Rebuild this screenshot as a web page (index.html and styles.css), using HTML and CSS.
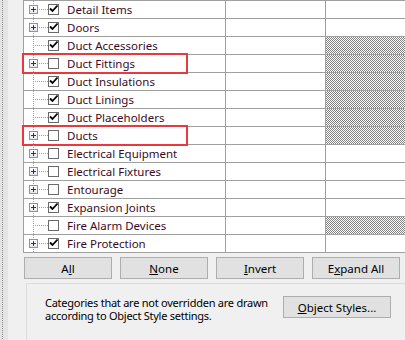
FILE: index.html
```html
<!DOCTYPE html>
<html lang="en">
<head>
    <meta charset="UTF-8">
    <meta name="viewport" content="width=device-width, initial-scale=1.0">
    <title>Visibility/Graphic Overrides</title>
    <link rel="stylesheet" href="styles.css">
</head>
<body>
    <div class="edge"></div>
    <div class="main">
        <div class="grid">
            <div class="row">
                <div class="cell tree"><span class="exp"></span><span class="twig"></span><span class="chk"><svg viewBox="0 0 11 11"><path d="M2 4.5 L4.5 7 L9.5 1.5"/></svg></span><span class="name">Detail Items</span></div>
                <div class="cell"></div>
                <div class="cell"></div>
            </div>
            <div class="row">
                <div class="cell tree"><span class="exp"></span><span class="twig"></span><span class="chk"><svg viewBox="0 0 11 11"><path d="M2 4.5 L4.5 7 L9.5 1.5"/></svg></span><span class="name">Doors</span></div>
                <div class="cell"></div>
                <div class="cell"></div>
            </div>
            <div class="row">
                <div class="cell tree"><span class="twig leaf"></span><span class="chk"><svg viewBox="0 0 11 11"><path d="M2 4.5 L4.5 7 L9.5 1.5"/></svg></span><span class="name">Duct Accessories</span></div>
                <div class="cell"></div>
                <div class="cell hatch"></div>
            </div>
            <div class="row">
                <div class="cell tree"><span class="exp"></span><span class="twig"></span><span class="chk"></span><span class="name">Duct Fittings</span></div>
                <div class="cell"></div>
                <div class="cell hatch"></div>
                <span class="mark"></span>
            </div>
            <div class="row">
                <div class="cell tree"><span class="twig leaf"></span><span class="chk"><svg viewBox="0 0 11 11"><path d="M2 4.5 L4.5 7 L9.5 1.5"/></svg></span><span class="name">Duct Insulations</span></div>
                <div class="cell"></div>
                <div class="cell hatch"></div>
            </div>
            <div class="row">
                <div class="cell tree"><span class="twig leaf"></span><span class="chk"><svg viewBox="0 0 11 11"><path d="M2 4.5 L4.5 7 L9.5 1.5"/></svg></span><span class="name">Duct Linings</span></div>
                <div class="cell"></div>
                <div class="cell hatch"></div>
            </div>
            <div class="row">
                <div class="cell tree"><span class="twig leaf"></span><span class="chk"><svg viewBox="0 0 11 11"><path d="M2 4.5 L4.5 7 L9.5 1.5"/></svg></span><span class="name">Duct Placeholders</span></div>
                <div class="cell"></div>
                <div class="cell hatch"></div>
            </div>
            <div class="row">
                <div class="cell tree"><span class="exp"></span><span class="twig"></span><span class="chk"></span><span class="name">Ducts</span></div>
                <div class="cell"></div>
                <div class="cell hatch"></div>
                <span class="mark"></span>
            </div>
            <div class="row">
                <div class="cell tree"><span class="exp"></span><span class="twig"></span><span class="chk"></span><span class="name">Electrical Equipment</span></div>
                <div class="cell"></div>
                <div class="cell"></div>
            </div>
            <div class="row">
                <div class="cell tree"><span class="exp"></span><span class="twig"></span><span class="chk"></span><span class="name">Electrical Fixtures</span></div>
                <div class="cell"></div>
                <div class="cell"></div>
            </div>
            <div class="row">
                <div class="cell tree"><span class="exp"></span><span class="twig"></span><span class="chk"></span><span class="name">Entourage</span></div>
                <div class="cell"></div>
                <div class="cell"></div>
            </div>
            <div class="row">
                <div class="cell tree"><span class="exp"></span><span class="twig"></span><span class="chk"><svg viewBox="0 0 11 11"><path d="M2 4.5 L4.5 7 L9.5 1.5"/></svg></span><span class="name">Expansion Joints</span></div>
                <div class="cell"></div>
                <div class="cell"></div>
            </div>
            <div class="row">
                <div class="cell tree"><span class="twig leaf"></span><span class="chk"></span><span class="name">Fire Alarm Devices</span></div>
                <div class="cell"></div>
                <div class="cell hatch"></div>
            </div>
            <div class="row">
                <div class="cell tree"><span class="exp"></span><span class="twig"></span><span class="chk"><svg viewBox="0 0 11 11"><path d="M2 4.5 L4.5 7 L9.5 1.5"/></svg></span><span class="name">Fire Protection</span></div>
                <div class="cell"></div>
                <div class="cell"></div>
            </div>
        </div>

        <div class="buttons">
            <button>A<u>l</u>l</button>
            <button><u>N</u>one</button>
            <button><u>I</u>nvert</button>
            <button>E<u>x</u>pand All</button>
        </div>

        <div class="groupbox">
            <p class="note">Categories that are not overridden are drawn according to Object Style settings.</p>
            <button class="styles-btn"><u>O</u>bject Styles...</button>
        </div>
    </div>
</body>
</html>
```

FILE: styles.css
```css
:root {
    --bg: #f0f0f0;
    --line: #a0a0a0;
    --dots: #a0a0a0;
    --mark: #e8393f;
    --tree-text: #3a0b24;
}

* {
    margin: 0;
    padding: 0;
    box-sizing: border-box;
    font-family: 'Noto Sans', 'DejaVu Sans', sans-serif;
}

body {
    width: 405px;
    height: 340px;
    overflow: hidden;
    display: flex;
    background: var(--bg);
    font-size: 11.5px;
    color: #000;
}

.edge {
    width: 8px;
    flex: none;
    background:
        linear-gradient(#8c8c8c 50%, transparent 0) 2px 0 / 1px 2px repeat-y,
        #e4e4e4;
}

.main {
    flex: 1;
    min-width: 0;
    padding-left: 15px;
    overflow: hidden;
}

/* category grid */
.grid {
    margin-right: -20px;
    border-top: 1px solid var(--line);
    border-left: 1px solid var(--line);
    background: #fff;
}

.row {
    position: relative;
    display: grid;
    grid-template-columns: 202px 100px 1fr;
    height: 18px;
}

.cell {
    border-right: 1px solid var(--line);
    border-bottom: 1px solid var(--line);
}

.cell.hatch {
    background: repeating-conic-gradient(#808080 0 25%, #fff 0 50%) 0 0 / 2px 2px;
}

.tree {
    display: flex;
    align-items: center;
    padding-left: 5px;
    background: linear-gradient(var(--dots) 50%, transparent 0) 9px 0 / 1px 2px repeat-y;
    white-space: nowrap;
}

.exp {
    width: 9px;
    height: 9px;
    flex: none;
    border: 1px solid #8f929c;
    background:
        linear-gradient(#1d3383, #1d3383) center / 5px 1px no-repeat,
        linear-gradient(#1d3383, #1d3383) center / 1px 5px no-repeat,
        linear-gradient(#ffffff, #e6e8ee);
}

.twig {
    width: 10px;
    height: 1px;
    flex: none;
    background: linear-gradient(to right, var(--dots) 50%, transparent 0) 1px 0 / 2px 1px repeat-x;
}

.twig.leaf {
    width: 14px;
    margin-left: 5px;
}

.chk {
    width: 11px;
    height: 11px;
    flex: none;
    border: 1px solid #6a6a6a;
    background: #fff;
    position: relative;
}

.chk svg {
    position: absolute;
    left: -1px;
    top: -1px;
    width: 11px;
    height: 11px;
    fill: none;
    stroke: #000;
    stroke-width: 1.8;
}

.name {
    margin-left: 8px;
    color: var(--tree-text);
}

.mark {
    position: absolute;
    left: -2px;
    top: -2px;
    width: 166px;
    height: 21px;
    border: 2px solid var(--mark);
    pointer-events: none;
}

/* buttons */
button {
    height: 22px;
    background: #e1e1e1;
    border: 1px solid #adadad;
    color: #000;
    font-size: 11.5px;
    cursor: pointer;
}

.buttons {
    display: flex;
    gap: 8px;
    margin: 4px 0 0 1px;
}

.buttons button {
    width: 88px;
}

.groupbox {
    display: flex;
    align-items: flex-start;
    margin: 4px -20px 0 3px;
    height: 80px;
    padding: 12px 0 0 18px;
    border-top: 1px solid #dcdcdc;
    border-left: 1px solid #dcdcdc;
}

.note {
    width: 238px;
    font-size: 11px;
    letter-spacing: -0.25px;
    line-height: 13px;
}

.styles-btn {
    width: 108px;
}
```
